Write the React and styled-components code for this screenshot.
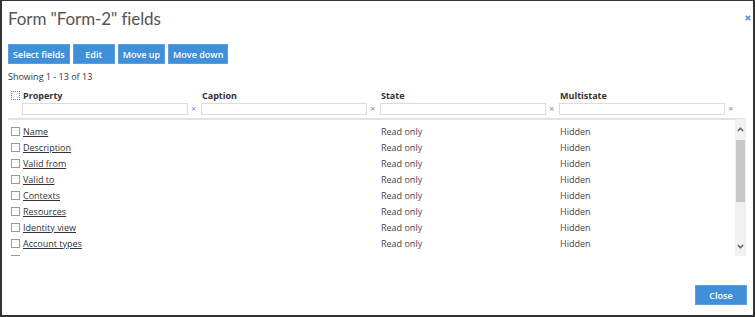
import React from "react";
import styled, { createGlobalStyle } from "styled-components";

const GlobalStyle = createGlobalStyle`
  html, body {
    margin: 0;
    padding: 0;
    background: #fff;
  }
  body {
    font-family: "Open Sans", "Liberation Sans", sans-serif;
  }
`;

const fields = [
  "Name",
  "Description",
  "Valid from",
  "Valid to",
  "Contexts",
  "Resources",
  "Identity view",
  "Account types",
  "Owner identity types",
];

const columns = ["Property", "Caption", "State", "Multistate"];

function App() {
  return (
    <>
      <GlobalStyle />
      <Dialog>
        <TitleBar>
          <Title>Form "Form-2" fields</Title>
          <CloseX aria-label="close">
            <svg width="6" height="6" viewBox="0 0 6 6">
              <path d="M0.8 0.8 L5.2 5.2 M5.2 0.8 L0.8 5.2" stroke="#4a90d9" strokeWidth="1.6" />
            </svg>
          </CloseX>
        </TitleBar>

        <Toolbar>
          <Button>Select fields</Button>
          <Button>Edit</Button>
          <Button>Move up</Button>
          <Button>Move down</Button>
        </Toolbar>

        <Showing>Showing 1 - 13 of 13</Showing>

        <HeadRow>
          <CheckCell>
            <Check dotted />
          </CheckCell>
          {columns.map((c) => (
            <HeadLabel key={c}>{c}</HeadLabel>
          ))}
        </HeadRow>
        <FilterRow>
          <span />
          {columns.map((c) => (
            <FilterCell key={c}>
              <FilterInput />
              <Clear>×</Clear>
            </FilterCell>
          ))}
        </FilterRow>

        <Separator />

        <Body>
          <Rows>
            {fields.map((f) => (
              <Row key={f}>
                <CheckCell>
                  <Check />
                </CheckCell>
                <Link>{f}</Link>
                <Cell></Cell>
                <Cell>Read only</Cell>
                <Cell>Hidden</Cell>
              </Row>
            ))}
          </Rows>
          <Scrollbar>
            <Arrow>
              <svg width="7" height="5" viewBox="0 0 7 5">
                <path d="M0.8 4 L3.5 1.2 L6.2 4" fill="none" stroke="#555" strokeWidth="1.3" />
              </svg>
            </Arrow>
            <Track>
              <Thumb />
            </Track>
            <Arrow>
              <svg width="7" height="5" viewBox="0 0 7 5">
                <path d="M0.8 1 L3.5 3.8 L6.2 1" fill="none" stroke="#555" strokeWidth="1.3" />
              </svg>
            </Arrow>
          </Scrollbar>
        </Body>

        <Footer>
          <Button wide>Close</Button>
        </Footer>
      </Dialog>
    </>
  );
}

const Dialog = styled.div`
  width: 755px;
  height: 317px;
  box-sizing: border-box;
  border: 2px solid #333;
  border-top-width: 1px;
  padding: 0 7px 0 6px;
  display: flex;
  flex-direction: column;
  background: #fff;
  overflow: hidden;
`;

const TitleBar = styled.div`
  height: 35px;
  display: flex;
  align-items: center;
  justify-content: space-between;
  margin-right: -5px;
`;

const Title = styled.h1`
  margin: 0;
  font-family: "Lato", "Open Sans", sans-serif;
  font-weight: 400;
  font-size: 17px;
  color: #555;
  letter-spacing: -0.1px;
`;

const CloseX = styled.span`
  display: flex;
  align-items: center;
  margin-top: -2px;
`;

const Toolbar = styled.div`
  display: flex;
  gap: 3px;
  margin-top: 8px;
`;

const Button = styled.button`
  height: 20px;
  min-width: ${(p) => (p.wide ? "52px" : "42px")};
  padding: 0 4px;
  border: 1px solid #5d9fde;
  background: #3f8fd9;
  color: #fff;
  font-family: "Open Sans", sans-serif;
  font-weight: 600;
  font-size: 9px;
  display: flex;
  align-items: center;
  justify-content: center;
  cursor: pointer;
`;

const Showing = styled.div`
  margin-top: 6px;
  height: 14px;
  line-height: 14px;
  font-size: 9px;
  color: #333;
`;

const gridCols = "15px 179px 179px 179px 1fr";

const HeadRow = styled.div`
  display: grid;
  grid-template-columns: ${gridCols};
  align-items: center;
  margin-top: 4px;
  height: 14px;
`;

const HeadLabel = styled.div`
  font-size: 9px;
  font-weight: 700;
  color: #333;
`;

const FilterRow = styled.div`
  display: grid;
  grid-template-columns: ${gridCols};
  height: 13px;
`;

const FilterCell = styled.div`
  display: flex;
  align-items: center;
  margin-left: -1px;
`;

const FilterInput = styled.div`
  width: 166px;
  height: 12px;
  box-sizing: border-box;
  border: 1px solid #dcdcdc;
  background: #fff;
`;

const Clear = styled.span`
  margin-left: 3px;
  font-size: 9px;
  line-height: 10px;
  color: #5b95cf;
`;

const Separator = styled.div`
  margin-top: 3px;
  height: 2px;
  background: #e2e2e2;
`;

const Body = styled.div`
  display: flex;
  height: 136px;
`;

const Rows = styled.div`
  flex: 1;
  overflow: hidden;
  padding-top: 3px;
`;

const Row = styled.div`
  display: grid;
  grid-template-columns: ${gridCols};
  align-items: center;
  height: 16px;
  font-size: 9px;
  color: #444;
`;

const CheckCell = styled.div`
  display: flex;
  align-items: center;
  padding-left: 3px;
`;

const Check = styled.span`
  box-sizing: border-box;
  width: 9px;
  height: 9px;
  border: 1px ${(p) => (p.dotted ? "dotted #777" : "solid #999")};
  background: #fff;
`;

const Link = styled.a`
  color: #333;
  text-decoration: underline;
  text-underline-offset: 1px;
  white-space: nowrap;
`;

const Cell = styled.div`
  white-space: nowrap;
`;

const Scrollbar = styled.div`
  width: 11px;
  margin-top: -1px;
  background: #f1f1f1;
  display: flex;
  flex-direction: column;
`;

const Arrow = styled.div`
  height: 20px;
  display: flex;
  align-items: center;
  justify-content: center;
`;

const Track = styled.div`
  flex: 1;
  padding: 1px 1px 0 1px;
`;

const Thumb = styled.div`
  height: 62px;
  background: #c8c8c8;
`;

const Footer = styled.div`
  display: flex;
  justify-content: flex-end;
  margin-top: 29px;
  margin-right: -1px;
`;

export default App;
